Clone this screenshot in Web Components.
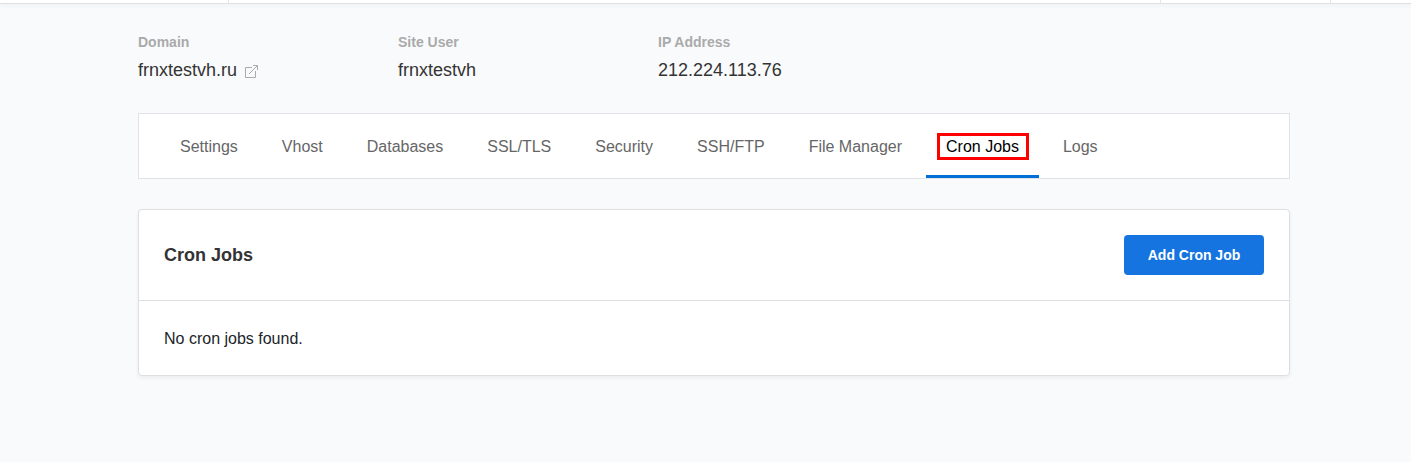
<!DOCTYPE html>
<html lang="en">
<head>
<meta charset="utf-8">
<title>Cron Jobs</title>
<style>
  body {
    margin: 0;
    background: #f9fafc;
    color: #333;
    font: 16px/24px "Liberation Sans", Arial, Helvetica, sans-serif;
  }
</style>
</head>
<body>
<cron-page></cron-page>
<script>
function define(name, html) {
  const template = document.createElement('template');
  template.innerHTML = html;
  customElements.define(name, class extends HTMLElement {
    constructor() {
      super();
      this.attachShadow({ mode: 'open' }).append(template.content.cloneNode(true));
    }
  });
}

define('top-bar', `
  <style>
    :host {
      display: grid;
      grid-template-columns: 228px 1fr 169px 80px;
      gap: 1px;
      height: 3px;
      background: #e6e6e6;
      border-bottom: 1px solid #e0e0e0;
      box-shadow: 0 2px 4px rgba(0, 0, 0, .04);
    }
    div { background: #fff; }
  </style>
  <div></div><div></div><div></div><div></div>`);

define('site-fact', `
  <style>
    :host { display: block; }
    dt { color: #aaa; font-size: 14px; font-weight: bold; line-height: 24px; }
    dd { display: flex; align-items: center; gap: 8px; margin: 4px 0 0; font-size: 18px; line-height: 24px; }
    dl { margin: 0; }
  </style>
  <dl><dt><slot name="label"></slot></dt><dd><slot></slot></dd></dl>`);

define('external-link', `
  <style>
    :host { display: block; margin-top: 2px; }
    a { display: block; color: #aaa; }
    svg { display: block; }
  </style>
  <a href="#" aria-label="Open site">
    <svg width="13" height="13" viewBox="0 0 13 13" fill="none" stroke="currentColor">
      <path d="M7 2.5H.5v10h10V6"/>
      <path d="M4 9L12 1M8 .5h4.5V5"/>
    </svg>
  </a>`);

define('tab-bar', `
  <style>
    :host { display: block; background: #fff; border: 1px solid #e0e2e5; }
    nav { display: flex; gap: 4px; padding: 0 21px; }
  </style>
  <nav><slot></slot></nav>`);

define('tab-item', `
  <style>
    :host { display: block; }
    a {
      position: relative;
      display: block;
      padding: 21px 20px 19px;
      color: #666;
      text-decoration: none;
      white-space: nowrap;
    }
    :host([active]) a { color: #000; box-shadow: inset 0 -3px #0070d8; }
    :host([active]) a::after {
      content: "";
      position: absolute;
      inset: 19px 10px 18px 11px;
      border: 3px solid #f00;
    }
  </style>
  <a href="#"><slot></slot></a>`);

define('action-button', `
  <style>
    :host { display: block; }
    button {
      min-width: 140px;
      height: 40px;
      padding: 0 20px;
      border: 0;
      border-radius: 4px;
      background: #1574e0;
      color: #fff;
      font: bold 14px/20px "Liberation Sans", Arial, sans-serif;
      cursor: pointer;
    }
  </style>
  <button type="button"><slot></slot></button>`);

define('panel-card', `
  <style>
    :host {
      display: block;
      background: #fff;
      border: 1px solid #dddfe1;
      border-radius: 4px;
      box-shadow: 0 2px 4px rgba(0, 0, 0, .06);
    }
    header {
      display: flex;
      align-items: center;
      justify-content: space-between;
      padding: 25px;
      border-bottom: 1px solid #dddfe1;
    }
    h2 { margin: 0; font-size: 18px; line-height: 24px; }
    .body { padding: 26px 25px 24px; color: #212529; }
  </style>
  <header><h2><slot name="title"></slot></h2><slot name="action"></slot></header>
  <div class="body"><slot></slot></div>`);

define('cron-page', `
  <style>
    :host { display: block; }
    main { display: grid; gap: 30px; padding: 26px 121px 30px 138px; }
    .facts { display: grid; grid-template-columns: repeat(3, 260px); padding-bottom: 1px; }
  </style>
  <top-bar></top-bar>
  <main>
    <div class="facts">
      <site-fact><span slot="label">Domain</span><span>frnxtestvh.ru</span><external-link></external-link></site-fact>
      <site-fact><span slot="label">Site User</span>frnxtestvh</site-fact>
      <site-fact><span slot="label">IP Address</span>212.224.113.76</site-fact>
    </div>
    <tab-bar>
      <tab-item>Settings</tab-item>
      <tab-item>Vhost</tab-item>
      <tab-item>Databases</tab-item>
      <tab-item>SSL/TLS</tab-item>
      <tab-item>Security</tab-item>
      <tab-item>SSH/FTP</tab-item>
      <tab-item>File Manager</tab-item>
      <tab-item active>Cron Jobs</tab-item>
      <tab-item>Logs</tab-item>
    </tab-bar>
    <panel-card>
      <span slot="title">Cron Jobs</span>
      <action-button slot="action">Add Cron Job</action-button>
      No cron jobs found.
    </panel-card>
  </main>`);
</script>
</body>
</html>
